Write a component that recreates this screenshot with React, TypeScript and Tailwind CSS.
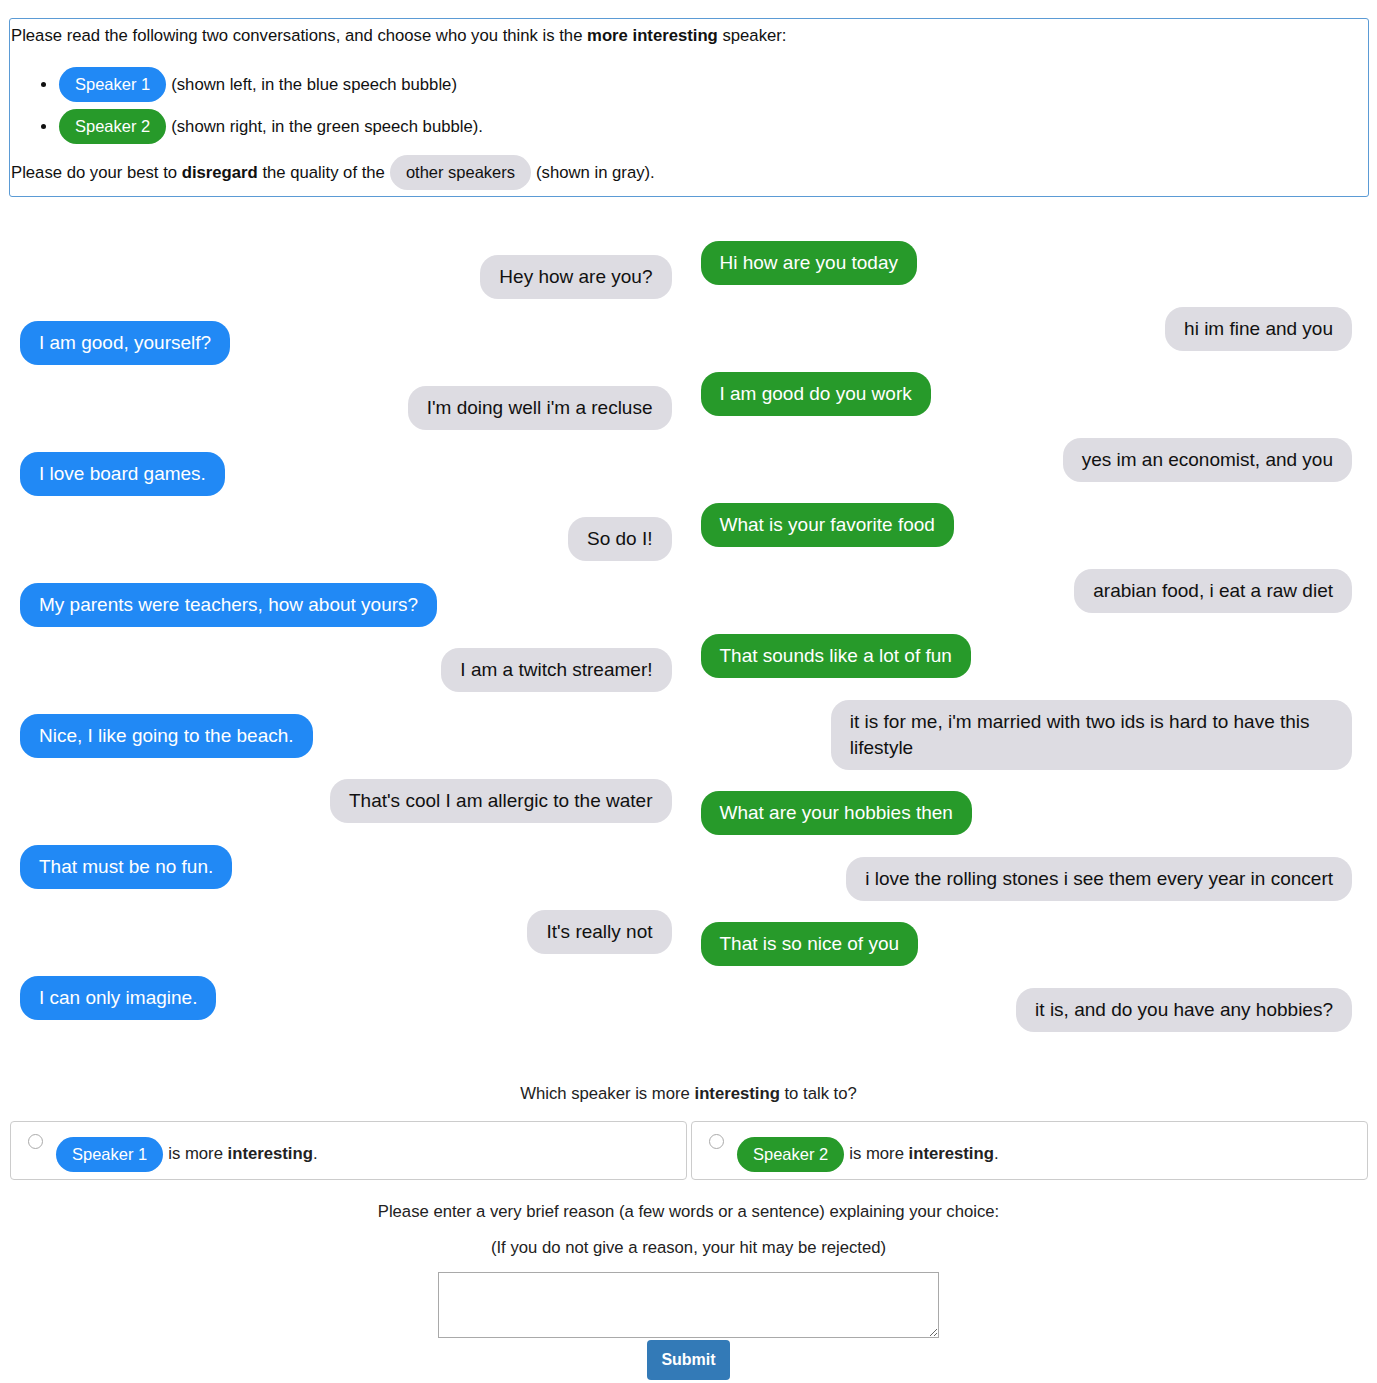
import React from 'react';

type Kind = 's1' | 's2' | 'other';
type Msg = { kind: Kind; text: string };

const leftMsgs: Msg[] = [
  { kind: 'other', text: 'Hey how are you?' },
  { kind: 's1', text: 'I am good, yourself?' },
  { kind: 'other', text: "I'm doing well i'm a recluse" },
  { kind: 's1', text: 'I love board games.' },
  { kind: 'other', text: 'So do I!' },
  { kind: 's1', text: 'My parents were teachers, how about yours?' },
  { kind: 'other', text: 'I am a twitch streamer!' },
  { kind: 's1', text: 'Nice, I like going to the beach.' },
  { kind: 'other', text: "That's cool I am allergic to the water" },
  { kind: 's1', text: 'That must be no fun.' },
  { kind: 'other', text: "It's really not" },
  { kind: 's1', text: 'I can only imagine.' },
];

const rightMsgs: Msg[] = [
  { kind: 's2', text: 'Hi how are you today' },
  { kind: 'other', text: 'hi im fine and you' },
  { kind: 's2', text: 'I am good do you work' },
  { kind: 'other', text: 'yes im an economist, and you' },
  { kind: 's2', text: 'What is your favorite food' },
  { kind: 'other', text: 'arabian food, i eat a raw diet' },
  { kind: 's2', text: 'That sounds like a lot of fun' },
  { kind: 'other', text: "it is for me, i'm married with two ids is hard to have this lifestyle" },
  { kind: 's2', text: 'What are your hobbies then' },
  { kind: 'other', text: 'i love the rolling stones i see them every year in concert' },
  { kind: 's2', text: 'That is so nice of you' },
  { kind: 'other', text: 'it is, and do you have any hobbies?' },
];

function Bubble({ msg }: { msg: Msg }) {
  if (msg.kind === 's1') {
    return (
      <div className="max-w-[80%] self-start rounded-[18px] bg-[#2189f5] px-[19px] py-[9px] text-[19px] leading-[26px] text-white">
        {msg.text}
      </div>
    );
  }
  if (msg.kind === 's2') {
    return (
      <div className="max-w-[80%] self-start rounded-[18px] bg-[#279a2a] px-[19px] py-[9px] text-[19px] leading-[26px] text-white">
        {msg.text}
      </div>
    );
  }
  return (
    <div className="max-w-[80%] self-end rounded-[18px] bg-[#dddce2] px-[19px] py-[9px] text-[19px] leading-[26px] text-[#111]">
      {msg.text}
    </div>
  );
}

function Badge({ kind, children }: { kind: Kind; children: React.ReactNode }) {
  const color =
    kind === 's1' ? 'bg-[#2189f5] text-white' : kind === 's2' ? 'bg-[#279a2a] text-white' : 'bg-[#dddce2] text-[#111]';
  return (
    <span className={`${color} inline-flex h-[35px] items-center rounded-full px-[16px] text-[16.5px]`}>{children}</span>
  );
}

function Option({ kind, label }: { kind: Kind; label: string }) {
  return (
    <label className="flex flex-1 items-start rounded-[4px] border border-[#cccccc] pb-[7px] pl-[17px] pt-[15px]">
      <input
        type="radio"
        name="choice"
        className="mt-[-3px] h-[15px] w-[15px] appearance-none rounded-full border border-[#aaaaaa] bg-white"
      />
      <span className="ml-[13px] flex items-center">
        <Badge kind={kind}>{label}</Badge>
        <span className="ml-[5px] text-[16.7px] text-[#222]">
          is more <b>interesting</b>.
        </span>
      </span>
    </label>
  );
}

export default function App() {
  return (
    <div className="min-h-screen bg-white font-['Liberation_Sans',Arial,sans-serif] text-[#111]">
      {/* Instructions */}
      <div className="pl-[9px] pr-[8px] pt-[18px]">
        <div className="flex flex-col rounded-[3px] border border-[#5b9bd5] px-[1px] pb-[6px] pt-[7px] text-[16.7px]">
          <p className="leading-[20px]">
            Please read the following two conversations, and choose who you think is the <b>more interesting</b> speaker:
          </p>
          <ul className="mt-[21px] flex flex-col gap-[7px]">
            <li className="flex items-center">
              <span className="ml-[30px] h-[5px] w-[5px] rounded-full bg-[#111]" />
              <span className="ml-[13px]">
                <Badge kind="s1">Speaker 1</Badge>
              </span>
              <span className="ml-[5px]">(shown left, in the blue speech bubble)</span>
            </li>
            <li className="flex items-center">
              <span className="ml-[30px] h-[5px] w-[5px] rounded-full bg-[#111]" />
              <span className="ml-[13px]">
                <Badge kind="s2">Speaker 2</Badge>
              </span>
              <span className="ml-[5px]">(shown right, in the green speech bubble).</span>
            </li>
          </ul>
          <p className="mt-[11px] flex items-center">
            <span>
              Please do your best to <b>disregard</b> the quality of the
            </span>
            <span className="ml-[5px]">
              <Badge kind="other">other speakers</Badge>
            </span>
            <span className="ml-[5px]">(shown in gray).</span>
          </p>
        </div>
      </div>

      {/* Conversations */}
      <div className="mt-[44px] grid grid-cols-2 gap-x-[29px] pl-[20px] pr-[25px]">
        <div className="flex flex-col gap-[21.5px] pt-[14px]">
          {leftMsgs.map((m, i) => (
            <Bubble key={i} msg={m} />
          ))}
        </div>
        <div className="flex flex-col gap-[21.5px]">
          {rightMsgs.map((m, i) => (
            <Bubble key={i} msg={m} />
          ))}
        </div>
      </div>

      {/* Choice */}
      <p className="mt-[52px] text-center text-[16.7px] leading-[20px] text-[#222]">
        Which speaker is more <b>interesting</b> to talk to?
      </p>
      <div className="mt-[17px] flex gap-[4px] pl-[10px] pr-[9px]">
        <Option kind="s1" label="Speaker 1" />
        <Option kind="s2" label="Speaker 2" />
      </div>

      <p className="mt-[22px] text-center text-[16.7px] leading-[20px] text-[#222]">
        Please enter a very brief reason (a few words or a sentence) explaining your choice:
      </p>
      <p className="mt-[16px] text-center text-[16.7px] leading-[20px] text-[#222]">
        (If you do not give a reason, your hit may be rejected)
      </p>
      <div className="mt-[14px] flex flex-col items-center">
        <textarea className="h-[66px] w-[501px] border border-[#a9a9a9] bg-white" />
        <button className="mt-[2px] h-[40px] w-[83px] rounded-[4px] bg-[#337ab7] text-[16px] font-bold text-white">
          Submit
        </button>
      </div>
    </div>
  );
}
